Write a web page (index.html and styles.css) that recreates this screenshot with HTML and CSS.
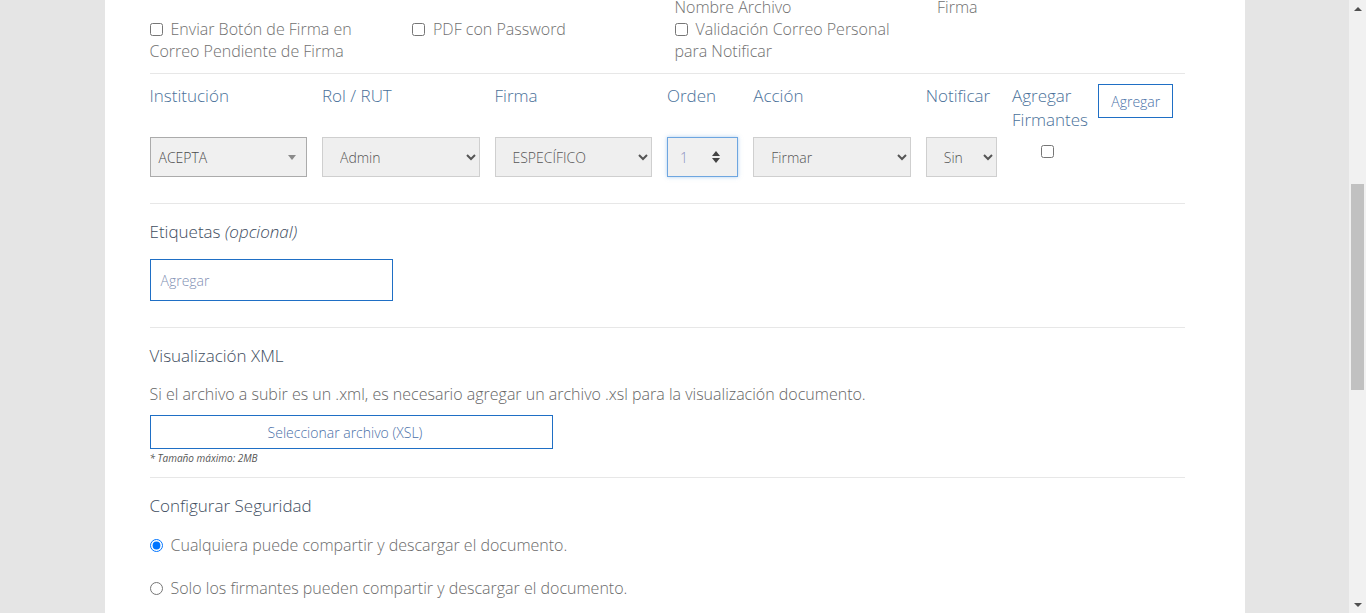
FILE: index.html
```html
<!DOCTYPE html>
<html lang="es">
<head>
<meta charset="utf-8">
<title>Documento</title>
<link rel="stylesheet" href="styles.css">
</head>
<body>
<div class="screen">
  <main class="viewport">
    <div class="panel">
      <div class="opts">
        <div class="opt-cont col3">Nombre Archivo</div>
        <div class="opt-cont col4">Firma</div>
        <label class="opt col1"><input type="checkbox">Enviar Botón de Firma en Correo Pendiente de Firma</label>
        <label class="opt col2"><input type="checkbox">PDF con Password</label>
        <label class="opt col3"><input type="checkbox">Validación Correo Personal para Notificar</label>
      </div>
      <div class="divider d1"></div>

      <div class="signers">
        <div class="cell lbl">Institución</div>
        <div class="cell lbl">Rol / RUT</div>
        <div class="cell lbl">Firma</div>
        <div class="cell lbl">Orden</div>
        <div class="cell lbl">Acción</div>
        <div class="cell lbl">Notificar</div>
        <div class="cell lbl">Agregar Firmantes</div>
        <div class="cell"><button class="btn-add" type="button">Agregar</button></div>

        <div class="cell">
          <div class="fake-select"><span>ACEPTA</span><span class="tri"></span></div>
        </div>
        <div class="cell"><select class="sel"><option>Admin</option></select></div>
        <div class="cell"><select class="sel"><option>ESPECÍFICO</option></select></div>
        <div class="cell">
          <div class="num-input"><span>1</span>
            <svg class="spin" width="8" height="12" viewBox="0 0 8 12"><path d="M4 0 L8 5 L0 5 Z M0 7 L8 7 L4 12 Z" fill="#444"/></svg>
          </div>
        </div>
        <div class="cell"><select class="sel"><option>Firmar</option></select></div>
        <div class="cell"><select class="sel"><option>Sin</option></select></div>
        <div class="cell center"><input class="chk-add" type="checkbox"></div>
        <div class="cell"></div>
      </div>
      <div class="divider d2"></div>

      <section class="block tags">
        <h3 class="title">Etiquetas <em>(opcional)</em></h3>
        <div class="tag-input">Agregar</div>
      </section>
      <div class="divider d3"></div>

      <section class="block xml">
        <h3 class="title">Visualización XML</h3>
        <p class="desc">Si el archivo a subir es un .xml, es necesario agregar un archivo .xsl para la visualización documento.</p>
        <button class="btn-file" type="button">Seleccionar archivo (XSL)</button>
        <p class="note">* Tamaño máximo: 2MB</p>
      </section>
      <div class="divider d4"></div>

      <section class="block sec">
        <h3 class="title">Configurar Seguridad</h3>
        <label class="radio r1"><input type="radio" name="seg" checked>Cualquiera puede compartir y descargar el documento.</label>
        <label class="radio r2"><input type="radio" name="seg">Solo los firmantes pueden compartir y descargar el documento.</label>
      </section>
    </div>
  </main>
  <div class="scrollbar">
    <div class="sb-arrow up"></div>
    <div class="sb-track"><div class="sb-thumb"></div></div>
    <div class="sb-arrow down"></div>
  </div>
</div>
</body>
</html>
```

FILE: styles.css
```css
html, body {
  margin: 0;
  padding: 0;
  height: 613px;
  overflow: hidden;
}

.screen {
  display: flex;
  height: 613px;
  background: #e5e5e5;
}

.viewport {
  flex: 1;
  display: flex;
  justify-content: center;
}

.panel {
  width: 1140px;
  height: 613px;
  box-sizing: border-box;
  padding: 0 60px 0 45px;
  background: #fff;
  overflow: hidden;
  font-family: "Open Sans", "Liberation Sans", sans-serif;
  font-weight: 300;
  color: #6b6b6b;
}

/* option checkboxes */
.opts {
  display: grid;
  grid-template-columns: repeat(4, 247.5px);
  column-gap: 15px;
  margin-top: -4px;
  font-size: 16px;
  line-height: 22px;
  color: #707070;
}
.opt-cont { grid-row: 1; }
.opt { grid-row: 2; }
.col1 { grid-column: 1; }
.col2 { grid-column: 2; }
.col3 { grid-column: 3; }
.col4 { grid-column: 4; }

.opt input {
  width: 13px;
  height: 13px;
  margin: 0 8px 0 0;
  vertical-align: -1px;
}

.divider {
  height: 1px;
  background: #e7e7e7;
}
.d1 { margin-top: 11px; }
.d2 { margin-top: 26px; }
.d3 { margin-top: 26px; }
.d4 { margin-top: 12px; }

/* signers row */
.signers {
  display: grid;
  grid-template-columns: 2fr 2fr 2fr 1fr 2fr 1fr 1fr 1fr;
  grid-template-rows: 48px 40px;
  row-gap: 5px;
  padding-top: 10px;
}
.cell {
  padding-right: 15px;
  min-width: 0;
}
.cell.center { text-align: center; }
.lbl {
  font-size: 17px;
  line-height: 24px;
  color: #4a719a;
  white-space: normal;
}

.btn-add {
  width: 75px;
  height: 34px;
  box-sizing: border-box;
  border: 1px solid #1f6fc5;
  background: #fff;
  color: #4b72a8;
  font-family: "Open Sans", "Liberation Sans", sans-serif;
  font-weight: 300;
  font-size: 14px;
  padding: 0;
}

.sel {
  width: 100%;
  height: 40px;
  box-sizing: border-box;
  border: 1px solid #cfcfcf;
  border-radius: 0;
  background-color: #efefef;
  color: #555;
  font-family: "Open Sans", "Liberation Sans", sans-serif;
  font-weight: 300;
  font-size: 14px;
  padding: 0 8px 0 13px;
}

.fake-select {
  height: 40px;
  box-sizing: border-box;
  border: 1px solid #ababab;
  background: #f0f0f0;
  display: flex;
  align-items: center;
  justify-content: space-between;
  padding: 0 10px 0 8px;
  font-size: 14px;
  color: #4a4a4a;
  font-weight: 300;
}
.tri {
  width: 0;
  height: 0;
  border-left: 4px solid transparent;
  border-right: 4px solid transparent;
  border-top: 5px solid #8a8a8a;
}

.num-input {
  height: 40px;
  box-sizing: border-box;
  border: 1px solid #6ea6e0;
  box-shadow: 0 0 4px rgba(110, 166, 224, 0.55);
  background: #f0f0f0;
  display: flex;
  align-items: center;
  justify-content: space-between;
  padding: 0 17px 0 12px;
  font-size: 14px;
  color: #8b90c0;
}

.chk-add {
  width: 13px;
  height: 13px;
  margin: 8px 0 0;
}

/* blocks */
.block { padding-top: 16px; }
.title {
  margin: 0;
  font-size: 17px;
  line-height: 24px;
  font-weight: 300;
  color: #3e4d60;
}
.title em { font-style: italic; }

.tag-input {
  width: 243px;
  height: 42px;
  box-sizing: border-box;
  margin-top: 15px;
  border: 1px solid #1f6fc5;
  padding-left: 10px;
  display: flex;
  align-items: center;
  font-size: 14px;
  color: #7f8fb3;
}

.desc {
  margin: 14px 0 0;
  font-size: 16px;
  line-height: 24px;
  color: #666;
}
.btn-file {
  display: block;
  width: 403px;
  height: 34px;
  box-sizing: border-box;
  margin-top: 9px;
  border: 1px solid #1f6fc5;
  background: #fff;
  color: #4a70a8;
  font-family: "Open Sans", "Liberation Sans", sans-serif;
  font-weight: 300;
  font-size: 14px;
  padding: 0 12px 0 0;
}
.note {
  margin: 2px 0 0;
  font-size: 10px;
  line-height: 14px;
  font-style: italic;
  color: #555;
  font-weight: 400;
}

.radio {
  display: block;
  font-size: 16px;
  line-height: 24px;
  color: #6b6b6b;
}
.radio input {
  width: 13px;
  height: 13px;
  margin: 0 8px 0 0;
  vertical-align: -1px;
}
.r1 { margin-top: 15px; }
.r2 { margin-top: 19px; }

/* scrollbar */
.scrollbar {
  width: 17px;
  background: #f1f1f1;
  display: flex;
  flex-direction: column;
}
.sb-arrow {
  height: 17px;
  display: flex;
  align-items: center;
  justify-content: center;
}
.sb-arrow.up::before,
.sb-arrow.down::before {
  content: "";
  width: 0;
  height: 0;
  border-left: 4px solid transparent;
  border-right: 4px solid transparent;
}
.sb-arrow.up::before { border-bottom: 4px solid #505050; }
.sb-arrow.down::before { border-top: 4px solid #505050; }
.sb-track {
  flex: 1;
  padding: 167px 2px 0;
}
.sb-thumb {
  height: 206px;
  background: #c1c1c1;
}
```
